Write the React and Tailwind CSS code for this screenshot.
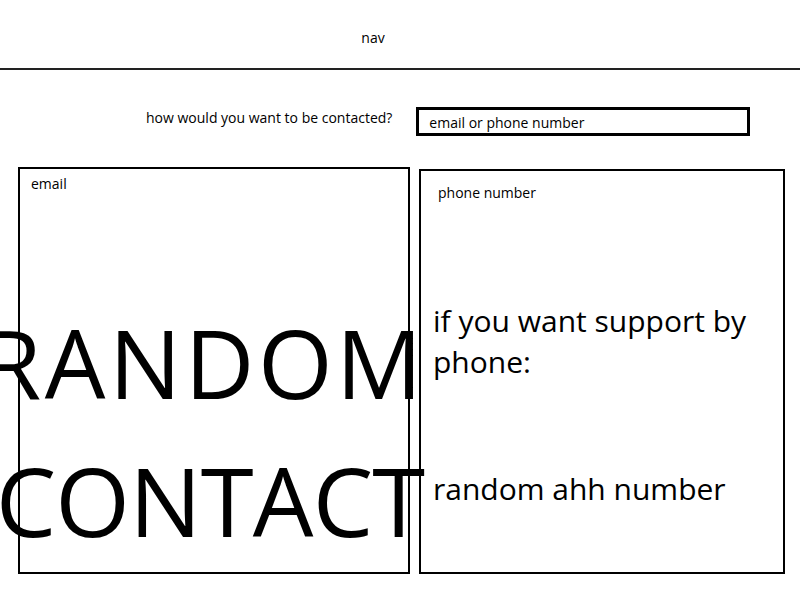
import React from "react";

const font = { fontFamily: '"Open Sans", "Noto Sans", sans-serif' };

const App = () => {
  return (
    <div className="w-[800px] h-[600px] bg-white text-black overflow-hidden" style={font}>
      {/* Nav */}
      <div className="h-[70px] border-b-2 border-[#222] flex justify-center pt-[28px] pr-[54px]">
        <span className="text-[14px] leading-[20px]">nav</span>
      </div>

      {/* Contact choice */}
      <div className="flex items-start pl-[146px] pt-[37px]">
        <span className="text-[14px] leading-[20px] mt-[1px]">how would you want to be contacted?</span>
        <div className="ml-[24px] w-[334px] h-[29px] border-[3px] border-black flex items-center pl-[10px] pt-[3px]">
          <span className="text-[14px] leading-[20px]">email or phone number</span>
        </div>
      </div>

      {/* Boxes */}
      <div className="flex items-start pl-[18px] pt-[31px] gap-[9px]">
        <div className="w-[392px] h-[407px] border-2 border-black flex flex-col">
          <span className="text-[14px] leading-[20px] pl-[11px] pt-[5px]">email</span>
          <div className="mt-[99px] flex flex-col items-center">
            <span className="text-[96px] leading-[138px] whitespace-nowrap tracking-[3.5px] mr-[20px]">RANDOM</span>
            <span className="text-[96px] leading-[138px] whitespace-nowrap tracking-[-0.8px] mr-[8px]">CONTACT</span>
          </div>
        </div>

        <div className="w-[366px] h-[405px] mt-[2px] border-2 border-black flex flex-col">
          <span className="text-[14px] leading-[20px] pl-[17px] pt-[12px]">phone number</span>
          <p className="mt-[97px] pl-[12px] pr-[16px] text-[30px] leading-[41px]">
            if you want support by phone:
          </p>
          <p className="mt-[86px] pl-[12px] text-[30px] leading-[41px]">random ahh number</p>
        </div>
      </div>
    </div>
  );
};

export default App;
